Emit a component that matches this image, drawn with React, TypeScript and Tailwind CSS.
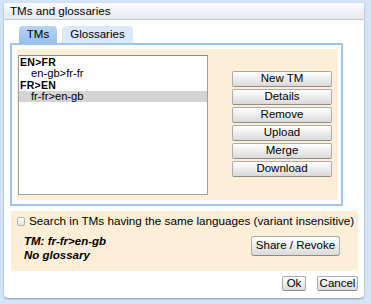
import React from "react";

const btn =
  "flex items-center justify-center rounded-[2px] border border-[#ababab] border-b-[#8c8c8c] bg-linear-to-b from-white to-[#dadada] text-black leading-none";

const tms = [
  { label: "EN>FR", group: true },
  { label: "en-gb>fr-fr" },
  { label: "FR>EN", group: true },
  { label: "fr-fr>en-gb", selected: true },
];

const actions = ["New TM", "Details", "Remove", "Upload", "Merge", "Download"];

export default function App() {
  return (
    <div className="w-[371px] h-[304px] bg-[#d3e4f6] pt-[3px] pl-[4px] pr-[7px] pb-[6px] font-['Liberation_Sans',Arial,sans-serif] text-black">
      <div className="h-full flex flex-col bg-white rounded-b-[4px] shadow-[0_1px_2px_rgba(0,0,0,0.35)]">
        {/* title bar */}
        <div className="h-[17px] shrink-0 flex items-center pl-[6px] border-b border-[#c5c8d0] bg-linear-to-b from-[#fdfdfe] to-[#e5e8ef] text-[11.6px]">
          TMs and glossaries
        </div>

        {/* tabs */}
        <div className="mt-[6px] ml-[15px] h-[17px] flex gap-[5px] text-[11.5px]">
          <div className="w-[38px] flex items-center justify-center rounded-t-[4px] bg-linear-to-b from-[#b6d4f4] to-[#96bfec]">
            TMs
          </div>
          <div className="w-[71px] flex items-center justify-center rounded-t-[4px] bg-[#dae8f8]">
            Glossaries
          </div>
        </div>

        {/* tab panel */}
        <div className="ml-[6px] w-[333px] h-[163px] shrink-0 border-2 border-[#9fc4ee] pt-[4px] pl-[5px] pr-[4px] pb-[4px]">
          <div className="h-full flex bg-[#fdeed8] pl-[1px] pt-[6px] pb-[5px] pr-[5px]">
            <div className="w-[190px] h-full bg-white border border-[#a0a0a0] border-t-[#8a8a8a] text-[11.2px]">
              {tms.map((t) => (
                <div
                  key={t.label}
                  className={`h-[11.5px] flex items-center leading-none ${
                    t.group ? "pl-[1px] font-bold text-[10.5px] tracking-[0.3px]" : "pl-[12px]"
                  } ${t.selected ? "bg-[#d4d4d4]" : ""}`}
                >
                  {t.label}
                </div>
              ))}
            </div>
            <div className="ml-[24px] mt-[16px] flex flex-col gap-[2px]">
              {actions.map((a) => (
                <button key={a} className={`${btn} w-[100px] h-[16px] text-[11.5px]`}>
                  {a}
                </button>
              ))}
            </div>
          </div>
        </div>

        {/* search / current selection */}
        <div className="mt-[5px] ml-[7px] w-[347px] h-[60px] shrink-0 bg-[#fdeed8] pt-[4px]">
          <div className="h-[12px] flex items-center pl-[6px] text-[11.7px]">
            <span className="w-[8px] h-[9px] shrink-0 rounded-[2px] border border-[#b4b4b4] bg-linear-to-b from-white to-[#e4e4e4]" />
            <span className="ml-[4px] whitespace-nowrap">Search in TMs having the same languages (variant insensitive)</span>
          </div>
          <div className="mt-[7px] flex pl-[13px] pr-[18px]">
            <div className="flex-1 text-[11.5px] font-bold italic leading-[14px]">
              <div>TM: fr-fr&gt;en-gb</div>
              <div>No glossary</div>
            </div>
            <button className={`${btn} mt-[2px] w-[89px] h-[20px] rounded-[3px] text-[11.5px]`}>
              Share / Revoke
            </button>
          </div>
        </div>

        {/* dialog buttons */}
        <div className="mt-[5px] flex justify-end gap-[11px] pr-[6px]">
          <button className={`${btn} w-[24px] h-[15px] text-[11.5px]`}>Ok</button>
          <button className={`${btn} w-[41px] h-[15px] text-[11.5px]`}>Cancel</button>
        </div>
      </div>
    </div>
  );
}
